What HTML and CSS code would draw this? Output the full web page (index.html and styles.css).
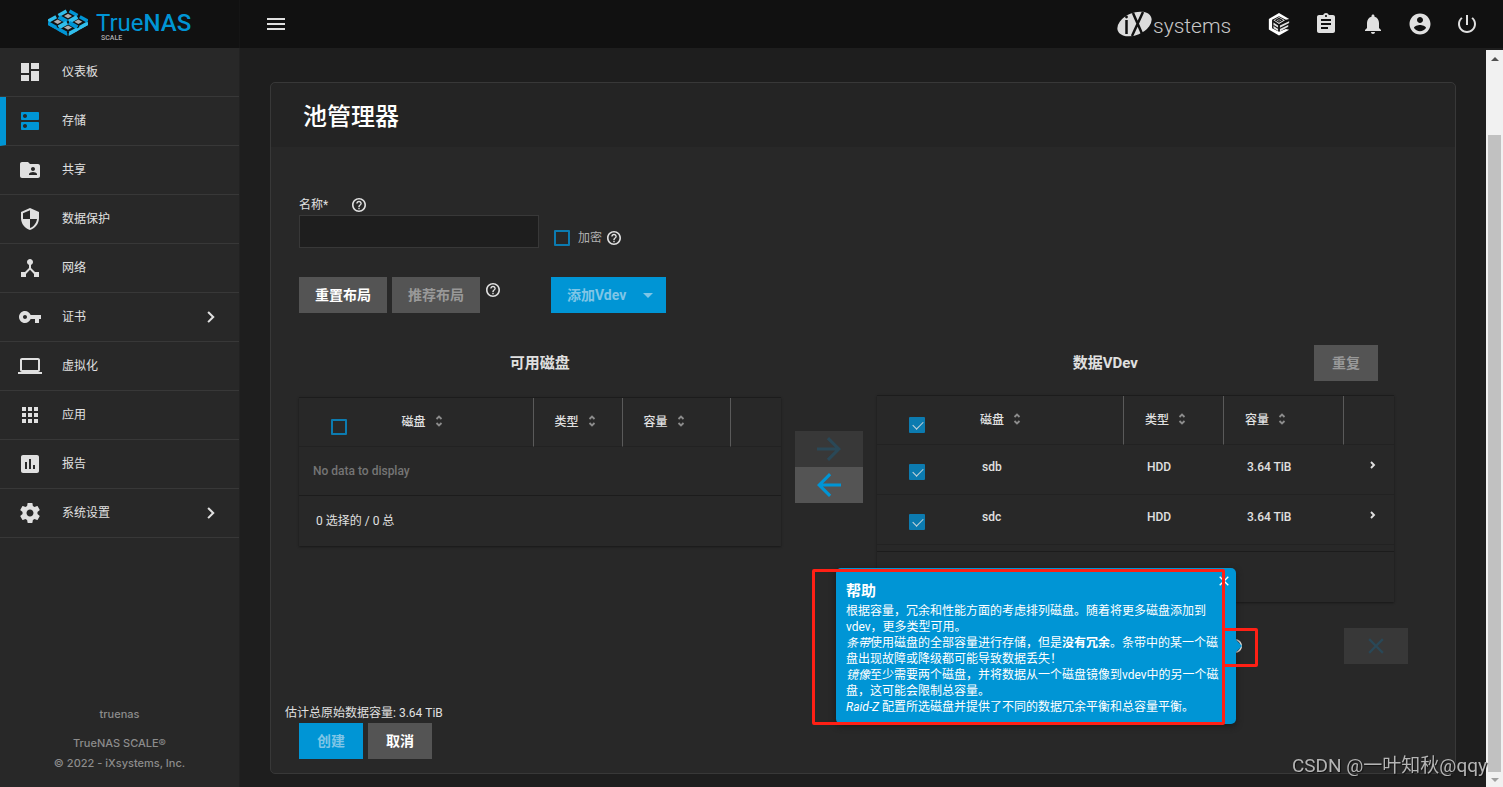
FILE: index.html
```html
<!DOCTYPE html>
<html lang="zh-CN">
<head>
<meta charset="utf-8">
<title>TrueNAS - 池管理器</title>
<link rel="stylesheet" href="styles.css">
</head>
<body>
<svg class="sprite" aria-hidden="true">
  <symbol id="dashboard" viewBox="0 0 24 24"><path d="M3 13h8V3H3v10zm0 8h8v-6H3v6zm10 0h8V11h-8v10zm0-18v6h8V3h-8z"/></symbol>
  <symbol id="storage" viewBox="0 0 24 24"><path d="M20 13H4c-.55 0-1 .45-1 1v6c0 .55.45 1 1 1h16c.55 0 1-.45 1-1v-6c0-.55-.45-1-1-1zM7 19c-1.100 0-2-.9-2-2s.9-2 2-2 2 .9 2 2-.9 2-2 2zM20 3H4c-.55 0-1 .45-1 1v6c0 .55.45 1 1 1h16c.55 0 1-.45 1-1V4c0-.55-.45-1-1-1zM7 9c-1.100 0-2-.9-2-2s.9-2 2-2 2 .9 2 2-.9 2-2 2z"/></symbol>
  <symbol id="share" viewBox="0 0 24 24"><path d="M20 6h-8l-2-2H4c-1.100 0-1.990.9-1.990 2L2 18c0 1.100.9 2 2 2h16c1.100 0 2-.9 2-2V8c0-1.100-.9-2-2-2zm-5 3c1.100 0 2 .9 2 2s-.9 2-2 2-2-.9-2-2 .9-2 2-2zm4 8h-8v-1c0-1.330 2.670-2 4-2s4 .67 4 2v1z"/></symbol>
  <symbol id="shield" viewBox="0 0 24 24"><path d="M12 1L3 5v6c0 5.550 3.840 10.740 9 12 5.160-1.260 9-6.450 9-12V5l-9-4zm0 10.990h7c-.53 4.120-3.280 7.790-7 8.940V12H5V6.300l7-3.110v8.800z"/></symbol>
  <symbol id="hub" viewBox="0 0 24 24"><path d="M17 16l-4-4V8.820C14.160 8.400 15 7.300 15 6c0-1.660-1.340-3-3-3S9 4.340 9 6c0 1.300.84 2.400 2 2.820V12l-4 4H3v5h5v-3.050l4-4.200 4 4.200V21h5v-5h-4z"/></symbol>
  <symbol id="key" viewBox="0 0 24 24"><path d="M12.650 10C11.830 7.670 9.610 6 7 6c-3.310 0-6 2.690-6 6s2.690 6 6 6c2.610 0 4.830-1.670 5.650-4H17v4h4v-4h2v-4H12.650zM7 14c-1.100 0-2-.9-2-2s.9-2 2-2 2 .9 2 2-.9 2-2 2z"/></symbol>
  <symbol id="laptop" viewBox="0 0 24 24"><path d="M20 18c1.100 0 1.990-.9 1.990-2L22 6c0-1.100-.9-2-2-2H4c-1.100 0-2 .9-2 2v10c0 1.100.9 2 2 2H0v2h24v-2h-4zM4 6h16v10H4V6z"/></symbol>
  <symbol id="apps" viewBox="0 0 24 24"><path d="M4 8h4V4H4v4zm6 12h4v-4h-4v4zm-6 0h4v-4H4v4zm0-6h4v-4H4v4zm6 0h4v-4h-4v4zm6-10v4h4V4h-4zm-6 4h4V4h-4v4zm6 6h4v-4h-4v4zm0 6h4v-4h-4v4z"/></symbol>
  <symbol id="report" viewBox="0 0 24 24"><path d="M19 3H5c-1.100 0-2 .9-2 2v14c0 1.100.9 2 2 2h14c1.100 0 2-.9 2-2V5c0-1.100-.9-2-2-2zM9 17H7v-7h2v7zm4 0h-2V7h2v10zm4 0h-2v-4h2v4z"/></symbol>
  <symbol id="gear" viewBox="0 0 24 24"><path d="M19.430 12.980c.04-.32.07-.64.07-.98s-.03-.66-.07-.98l2.110-1.650c.19-.15.24-.42.12-.64l-2-3.460c-.12-.22-.39-.3-.61-.22l-2.490 1c-.52-.4-1.080-.73-1.690-.98l-.38-2.650C14.460 2.180 14.250 2 14 2h-4c-.25 0-.46.18-.49.42l-.38 2.650c-.61.25-1.170.59-1.690.98l-2.490-1c-.23-.09-.49 0-.61.22l-2 3.460c-.13.22-.07.49.12.64l2.110 1.650c-.04.32-.07.65-.07.98s.03.66.07.98l-2.110 1.650c-.19.15-.24.42-.12.64l2 3.460c.12.22.39.3.61.22l2.490-1c.52.4 1.080.73 1.690.98l.38 2.650c.03.24.24.42.49.42h4c.25 0 .46-.18.49-.42l.38-2.650c.61-.25 1.170-.59 1.690-.98l2.490 1c.23.09.49 0 .61-.22l2-3.460c.12-.22.07-.49-.12-.64l-2.110-1.650zM12 15.500c-1.930 0-3.500-1.570-3.500-3.500s1.570-3.500 3.500-3.500 3.500 1.570 3.500 3.500-1.570 3.500-3.500 3.500z"/></symbol>
  <symbol id="chevron" viewBox="0 0 24 24"><path d="M7.500 4.500L10 2l10 10-10 10-2.500-2.500 7.500-7.500z"/></symbol>
  <symbol id="chevron-bold" viewBox="0 0 8 8"><path d="M2 1l3 3-3 3" fill="none" stroke="currentColor" stroke-width="1.900"/></symbol>
  <symbol id="help" viewBox="2 2 20 20"><path d="M11 18h2v-2h-2v2zm1-16C6.480 2 2 6.480 2 12s4.480 10 10 10 10-4.480 10-10S17.520 2 12 2zm0 17.700c-4.300 0-7.700-3.400-7.700-7.700S7.700 4.300 12 4.300s7.700 3.400 7.700 7.700-3.400 7.700-7.700 7.700zM12 6c-2.210 0-4 1.790-4 4h2c0-1.100.9-2 2-2s2 .9 2 2c0 2-3 1.750-3 5h2c0-2.250 3-2.500 3-5 0-2.210-1.790-4-4-4z"/></symbol>
  <symbol id="menu" viewBox="0 0 24 24"><path d="M3 18h18v-2H3v2zm0-5h18v-2H3v2zm0-7v2h18V6H3z"/></symbol>
  <symbol id="truecommand" viewBox="0 0 24 26"><path fill="#fff" d="M12 1l11 6.500-3.500 1L12 4.500 4.500 8.500v9L12 21.500l7.500-3 3.500.7L12 25.500 1 19V7.500z"/><path d="M6 9l6-3.500L18.500 9 12 13zM6 11.500l5 3v6l-5-3zM13 14.500l10-4.500v2l-10 5zM13 18.500l9-4.500v2l-9 5z"/><path d="M8.500 9L12 7l3.500 2L12 11zM6 14.500l5 3M11 9h2" fill="none" stroke="#111" stroke-width="1.200"/></symbol>
  <symbol id="clipboard" viewBox="0 0 24 24"><path d="M19 3h-4.180C14.400 1.840 13.300 1 12 1c-1.300 0-2.400.84-2.820 2H5c-1.100 0-2 .9-2 2v14c0 1.100.9 2 2 2h14c1.100 0 2-.9 2-2V5c0-1.100-.9-2-2-2zm-7 0c.55 0 1 .45 1 1s-.45 1-1 1-1-.45-1-1 .45-1 1-1zm2 14H7v-2h7v2zm3-4H7v-2h10v2zm0-4H7V7h10v2z"/></symbol>
  <symbol id="bell" viewBox="0 0 24 24"><path d="M12 22c1.100 0 2-.9 2-2h-4c0 1.100.89 2 2 2zm6-6v-5c0-3.070-1.640-5.640-4.500-6.320V4c0-.83-.67-1.500-1.500-1.500s-1.500.67-1.500 1.500v.68C7.630 5.360 6 7.920 6 11v5l-2 2v1h16v-1l-2-2z"/></symbol>
  <symbol id="account" viewBox="0 0 24 24"><path d="M12 1.500C6.200 1.500 1.500 6.200 1.500 12S6.200 22.500 12 22.500 22.500 17.800 22.500 12 17.800 1.500 12 1.500zM12 5c1.660 0 3 1.340 3 3s-1.340 3-3 3-3-1.340-3-3 1.340-3 3-3zm0 14.200c-2.500 0-4.710-1.280-6-3.220.03-1.990 4-3.080 6-3.080 1.990 0 5.970 1.090 6 3.080-1.290 1.940-3.500 3.220-6 3.220z"/></symbol>
  <symbol id="power" viewBox="0 0 24 24"><path d="M13 3h-2v10h2V3zm4.830 2.170l-1.420 1.420C17.990 7.860 19 9.810 19 12c0 3.870-3.130 7-7 7s-7-3.130-7-7c0-2.190 1.010-4.140 2.580-5.420L6.170 5.170C4.230 6.820 3 9.260 3 12c0 4.970 4.030 9 9 9s9-4.030 9-9c0-2.740-1.230-5.180-3.170-6.830z"/></symbol>
  <symbol id="sort" viewBox="0 0 8 12"><path d="M1.500 4L4 1.500 6.500 4M1.500 8L4 10.500 6.500 8" fill="none" stroke="currentColor" stroke-width="1.800"/></symbol>
  <symbol id="arrow" viewBox="0 0 24 24"><path d="M12 0l-2.200 2.200 8.300 8.300H0v3h18.100l-8.300 8.300L12 24l12-12z"/></symbol>
  <symbol id="close" viewBox="0 0 14 14"><path d="M1 1l12 12M13 1L1 13" fill="none" stroke="currentColor" stroke-width="2"/></symbol>
</svg>

<div class="app">
  <header class="topbar">
    <a class="brand" href="#" aria-label="TrueNAS SCALE">
      <svg class="brand-mark" viewBox="0 0 40 27">
        <defs>
          <g id="tile">
            <path fill="none" stroke="#31beec" stroke-width="3.400" d="M-9.500-.6l8-4.400M9.500 1.300l-8 4.400"/>
            <path fill="none" stroke="#0095d5" stroke-width="3.400" d="M9.500-.6l-8-4.400M-9.500 1.300l8 4.400"/>
            <path fill="#aeadae" d="M0-2.200L4 0 0 2.200-4 0z"/>
          </g>
        </defs>
        <use href="#tile" x="20" y="7"/>
        <use href="#tile" x="9.700" y="12.800"/>
        <use href="#tile" x="30.300" y="12.800"/>
        <use href="#tile" x="20" y="18.600"/>
        <path fill="#0095d5" d="M0 13l19.300 11.300V27L0 16z"/>
        <path fill="#31beec" d="M40 13L20.700 24.300V27L40 16z"/>
      </svg>
      <span class="brand-text"><span class="brand-name">True<b>NAS</b></span><small>SCALE</small></span>
    </a>
    <button class="icon-btn menu-btn" aria-label="菜单"><svg class="icon"><use href="#menu"/></svg></button>
    <div class="topbar-actions">
      <a class="ix" href="#" aria-label="iXsystems">
        <svg class="ix-mark" viewBox="0 0 35 26"><ellipse cx="17.500" cy="13" rx="18" ry="11" transform="rotate(-23 17.500 13)" fill="#dcdcdc"/><path d="M9.500 9v14M16 2l10 23M26 1L15 25" stroke="#111" stroke-width="2.500" fill="none"/><circle cx="9.500" cy="6" r="1.400" fill="#111"/></svg>
        <span class="ix-text">systems</span>
      </a>
      <button class="icon-btn" aria-label="TrueCommand"><svg class="icon"><use href="#truecommand"/></svg></button>
      <button class="icon-btn" aria-label="任务"><svg class="icon"><use href="#clipboard"/></svg></button>
      <button class="icon-btn" aria-label="通知"><svg class="icon"><use href="#bell"/></svg></button>
      <button class="icon-btn" aria-label="账户"><svg class="icon"><use href="#account"/></svg></button>
      <button class="icon-btn" aria-label="电源"><svg class="icon"><use href="#power"/></svg></button>
    </div>
  </header>

  <div class="body">
    <aside class="sidebar">
      <nav class="nav">
        <a href="#"><svg class="icon"><use href="#dashboard"/></svg><span>仪表板</span></a>
        <a href="#" class="active"><svg class="icon"><use href="#storage"/></svg><span>存储</span></a>
        <a href="#"><svg class="icon"><use href="#share"/></svg><span>共享</span></a>
        <a href="#"><svg class="icon"><use href="#shield"/></svg><span>数据保护</span></a>
        <a href="#"><svg class="icon"><use href="#hub"/></svg><span>网络</span></a>
        <a href="#"><svg class="icon"><use href="#key"/></svg><span>证书</span><svg class="nav-more"><use href="#chevron"/></svg></a>
        <a href="#"><svg class="icon"><use href="#laptop"/></svg><span>虚拟化</span></a>
        <a href="#"><svg class="icon"><use href="#apps"/></svg><span>应用</span></a>
        <a href="#"><svg class="icon"><use href="#report"/></svg><span>报告</span></a>
        <a href="#"><svg class="icon"><use href="#gear"/></svg><span>系统设置</span><svg class="nav-more"><use href="#chevron"/></svg></a>
      </nav>
      <footer class="about">
        <p class="host">truenas</p>
        <p>TrueNAS SCALE®</p>
        <p>© 2022 - iXsystems, Inc.</p>
      </footer>
    </aside>

    <main class="main">
      <section class="card">
        <h1 class="card-title">池管理器</h1>
        <div class="card-body">
          <div class="name-row">
            <div class="field">
              <div class="field-label"><label for="name">名称*</label><svg class="help"><use href="#help"/></svg></div>
              <input class="text-input" id="name" type="text">
            </div>
            <div class="encrypt">
              <input class="check" id="encrypt" type="checkbox"><label for="encrypt">加密</label><svg class="help"><use href="#help"/></svg>
            </div>
          </div>

          <div class="layout-row">
            <button class="btn">重置布局</button>
            <button class="btn" disabled>推荐布局</button>
            <svg class="help layout-help"><use href="#help"/></svg>
            <button class="btn primary add-btn" disabled>添加Vdev <span class="caret"></span></button>
          </div>

          <div class="disks">
            <section class="available">
              <div class="disks-head"><h2>可用磁盘</h2></div>
              <div class="table-box">
                <table class="table">
                  <colgroup><col class="a-check"><col class="a-disk"><col class="a-type"><col class="a-size"><col class="a-more"></colgroup>
                  <thead><tr>
                    <th><input class="check" type="checkbox" aria-label="全选可用磁盘"></th>
                    <th>磁盘<svg class="sort"><use href="#sort"/></svg></th>
                    <th>类型<svg class="sort"><use href="#sort"/></svg></th>
                    <th>容量<svg class="sort"><use href="#sort"/></svg></th>
                    <th></th>
                  </tr></thead>
                  <tbody><tr><td class="empty" colspan="5">No data to display</td></tr></tbody>
                </table>
                <div class="table-foot">0 选择的 / 0 总</div>
              </div>
            </section>

            <div class="movers">
              <button class="mover" disabled aria-label="添加到 VDev"><svg class="arrow"><use href="#arrow"/></svg></button>
              <button class="mover" aria-label="从 VDev 移除"><svg class="arrow left"><use href="#arrow"/></svg></button>
            </div>

            <section class="vdev">
              <div class="disks-head"><h2>数据VDev</h2><button class="btn repeat" disabled>重复</button></div>
              <div class="table-box">
                <table class="table">
                  <colgroup><col class="v-check"><col class="v-disk"><col class="v-type"><col class="v-size"><col class="v-more"></colgroup>
                  <thead><tr>
                    <th><input class="check" type="checkbox" checked aria-label="全选 VDev 磁盘"></th>
                    <th>磁盘<svg class="sort"><use href="#sort"/></svg></th>
                    <th>类型<svg class="sort"><use href="#sort"/></svg></th>
                    <th>容量<svg class="sort"><use href="#sort"/></svg></th>
                    <th></th>
                  </tr></thead>
                  <tbody>
                    <tr><td><input class="check" type="checkbox" checked aria-label="sdb"></td><td>sdb</td><td>HDD</td><td>3.64 TiB</td><td class="expand"><svg class="row-more"><use href="#chevron-bold"/></svg></td></tr>
                    <tr><td><input class="check" type="checkbox" checked aria-label="sdc"></td><td>sdc</td><td>HDD</td><td>3.64 TiB</td><td class="expand"><svg class="row-more"><use href="#chevron-bold"/></svg></td></tr>
                  </tbody>
                </table>
                <div class="table-foot spaced"></div>
              </div>
              <div class="vdev-actions">
                <svg class="help vdev-help"><use href="#help"/></svg>
                <button class="mover remove" disabled aria-label="删除"><svg class="x"><use href="#close"/></svg></button>
                <div class="tooltip" role="tooltip">
                  <button class="tooltip-close" aria-label="关闭"><svg><use href="#close"/></svg></button>
                  <h3>帮助</h3>
                  <p>根据容量，冗余和性能方面的考虑排列磁盘。随着将更多磁盘添加到vdev，更多类型可用。</p>
                  <p><em>条带</em>使用磁盘的全部容量进行存储，但是<strong>没有冗余</strong>。条带中的某一个磁盘出现故障或降级都可能导致数据丢失！</p>
                  <p><em>镜像</em>至少需要两个磁盘，并将数据从一个磁盘镜像到vdev中的另一个磁盘，这可能会限制总容量。</p>
                  <p><em>Raid-Z</em> 配置所选磁盘并提供了不同的数据冗余平衡和总容量平衡。</p>
                </div>
                <span class="mark mark-tip"></span>
                <span class="mark mark-icon"></span>
              </div>
            </section>
          </div>

          <p class="estimate">估计总原始数据容量: 3.64 TiB</p>
          <div class="form-actions">
            <button class="btn primary" disabled>创建</button>
            <button class="btn">取消</button>
          </div>
        </div>
      </section>
    </main>

    <div class="scrollbar" aria-hidden="true"><span class="sb-up"></span><span class="sb-thumb"></span><span class="sb-down"></span></div>
  </div>
</div>
<div class="watermark">CSDN @一叶知秋@qqy</div>
</body>
</html>
```
FILE: styles.css
```css
* { box-sizing: border-box; }
body {
  margin: 0;
  background: #1e1e1e;
  color: #e0e0e0;
  font: 12px/16px Roboto, "Noto Sans CJK SC", sans-serif;
  overflow: hidden;
}
h1, h2, h3, p { margin: 0; }
a { color: inherit; text-decoration: none; }
button, input { font: inherit; color: inherit; }
button { border: 0; padding: 0; background: none; }
svg { fill: currentColor; flex: none; }
.sprite { display: none; }
.app { height: 100vh; display: flex; flex-direction: column; }

/* Top bar */
.topbar { height: 48px; flex: none; display: flex; align-items: center; background: #111; }
.brand { width: 240px; padding-left: 48px; display: flex; gap: 8px; height: 48px; border-right: 1px solid #151515; }
.brand-mark { width: 40px; height: 27px; margin-top: 9px; }
.brand-text { display: flex; flex-direction: column; padding-top: 11px; color: #0095d5; }
.brand-name { font-size: 24px; line-height: 25px; font-weight: 400; }
.brand-name b { font-weight: 500; }
.brand small { font-size: 7px; line-height: 4px; padding-left: 5px; color: #aeadae; font-weight: 500; }
.icon { width: 24px; height: 24px; }
.icon-btn { display: flex; width: 24px; height: 24px; color: #e0e0e0; }
.menu-btn { margin-left: 24px; }
.topbar-actions { margin-left: auto; display: flex; align-items: center; gap: 23px; padding-right: 24px; }
.ix { display: flex; align-items: center; gap: 1px; width: 127px; color: #c8c8c8; }
.ix-mark { width: 35px; height: 26px; }
.ix-text { padding-top: 3px; font-size: 21px; line-height: 26px; font-weight: 300; }

/* Side navigation */
.body { flex: 1; min-height: 0; display: flex; }
.sidebar { width: 240px; flex: none; display: flex; flex-direction: column; justify-content: space-between; background: #282828; border-right: 1px solid #222; }
.nav a { height: 49px; display: flex; align-items: center; gap: 20px; padding: 0 22px 0 18px; border-bottom: 1px solid #383838; }
.nav a.active { border-left: 6px solid #0095d5; padding-left: 12px; }
.nav .active .icon { color: #0095d5; }
.nav-more { width: 14px; height: 14px; margin-left: auto; }
.about { padding-bottom: 14px; text-align: center; color: #8c8c8c; font: 500 11px/20px Inter, sans-serif; }
.host { margin-bottom: 9px; }

/* Page */
.main { flex: 1; min-width: 0; padding: 34px 30px 13px; display: flex; }
.card { flex: 1; min-width: 0; display: flex; flex-direction: column; background: #282828; border: 1px solid #383838; border-radius: 5px; }
.card-title { padding: 18px 32px 14px; background: #242424; border-radius: 5px 5px 0 0; color: #fff; font-size: 24px; line-height: 32px; font-weight: 500; }
.card-body { flex: 1; display: flex; flex-direction: column; padding: 48px 47px 14px 28px; }
.help { width: 14px; height: 14px; }
.name-row { display: flex; align-items: flex-end; gap: 15px; }
.field { width: 240px; }
.field-label { display: flex; align-items: center; gap: 24px; height: 20px; }
.text-input { display: block; width: 100%; height: 33px; border: 1px solid #383838; background: #1e1e1e; padding: 0 8px; }
.encrypt { display: flex; align-items: center; gap: 5px; height: 20px; color: #b0b0b0; }
.encrypt label { padding-left: 3px; }
.encrypt .help { color: #e0e0e0; }
.check { appearance: none; display: block; width: 16px; height: 16px; margin: 0; border: 2px solid #0c7bb0; border-radius: 1px; }
.check:checked { background: #0c7bb0; }
.check:checked::after { content: ""; display: block; width: 9px; height: 5px; margin: 2px; border: solid #c8d4da; border-width: 0 0 1px 1px; rotate: -45deg; }

.btn { height: 36px; min-width: 64px; padding: 0 16px; background: #545454; color: #fff; font-size: 14px; font-weight: 700; }
.btn:disabled { color: #999; }
.btn.primary { background: #0095d5; }
.btn.primary:disabled { color: #7fc5e6; }
.layout-row { display: flex; gap: 5px; margin-top: 29px; }
.layout-help { margin: 6px 0 0 1px; }
.add-btn { display: flex; align-items: center; gap: 17px; margin-left: 46px; padding: 0 13px 0 16px; }
.caret { border: 5px solid transparent; border-top-color: currentColor; border-bottom: 0; }

/* Disk tables */
.disks { display: grid; grid-template-columns: minmax(0, 482fr) 68px minmax(0, 532fr); gap: 14px; margin-top: 32px; }
.disks-head { display: flex; justify-content: center; align-items: center; height: 36px; }
.disks-head h2 { font-size: 15px; line-height: 20px; font-weight: 700; }
.available .table-box { margin-top: 16px; }
.vdev { padding-right: 14px; }
.vdev .disks-head { padding-right: 16px; }
.vdev h2 { flex: 1; padding-left: 20px; text-align: center; }
.vdev .table-box { margin-top: 14px; }
.table-box { border-top: 1px solid #1c1c1c; box-shadow: 0 1px 2px #181818; }
.table { width: 100%; table-layout: fixed; border-collapse: separate; border-spacing: 0; }
.a-disk { width: 153px; } .a-type { width: 89px; } .a-size { width: 108px; } .a-more { width: 51px; }
.v-disk { width: 165px; } .v-type { width: 100px; } .v-size { width: 120px; } .v-more { width: 51px; }
th, td { height: 50px; padding: 0 0 6px 24px; text-align: left; font-weight: 500; border-bottom: 1px solid #222; }
th { height: 49px; padding: 0 0 0 22px; }
th + th + th { padding-left: 21px; border-left: 1px solid #5a5a5a; }
th .check { margin: 10px 0 0 10px; }
td .check { margin: 10px 0 0 8px; }
.sort { width: 8px; height: 12px; margin-left: 9px; vertical-align: -1px; color: #8c8c8c; }
.empty { padding: 0 14px; height: 48px; color: #757575; border-bottom: 0; }
.table-foot { height: 51px; padding: 17px; border-top: 1px solid #1c1c1c; }
.spaced { margin-top: 6px; }
td.expand { padding: 0 0 10px 26px; }
.row-more { display: block; width: 8px; height: 8px; }
.movers { padding-top: 86px; }
.mover { display: flex; align-items: center; justify-content: center; width: 68px; height: 36px; background: #545454; color: #0095d5; }
.mover:disabled { background: #383838; color: #2a4857; }
.arrow { width: 24px; height: 24px; }
.left { rotate: 180deg; }

/* Vdev tools with the open help bubble */
.vdev-actions { position: relative; display: flex; justify-content: flex-end; align-items: center; margin: 26px -14px 0 0; }
.vdev-help { margin-right: 102px; }
.remove { width: 64px; }
.x { width: 16px; height: 16px; }
.tooltip { position: absolute; top: -60px; right: 172px; width: 400px; padding: 13px 16px 9px 10px; background: #0095d5; color: #fff; border-radius: 5px; box-shadow: 0 2px 6px #1a1a1a; }
.tooltip::after { content: ""; position: absolute; left: 100%; top: 72px; border: 6px solid transparent; border-left-color: #0095d5; border-right: 0; }
.tooltip h3 { font-size: 15px; line-height: 20px; padding-bottom: 2px; font-weight: 700; }
.tooltip-close { position: absolute; top: 8px; right: 7px; width: 10px; height: 10px; }
.tooltip-close svg { display: block; width: 10px; height: 10px; }
.mark { position: absolute; border: 3px solid #ff2015; border-radius: 2px; }
.mark-tip { top: -59px; right: 183px; width: 413px; height: 156px; }
.mark-icon { top: 0; right: 150px; width: 36px; height: 39px; }

.estimate { margin: auto 0 2px -14px; }
.form-actions { display: flex; gap: 5px; }

/* Scroll track */
.scrollbar { width: 17px; flex: none; margin-top: 2px; padding: 7px 2px 5px; background: #f1f1f1; display: flex; flex-direction: column; align-items: center; }
.sb-up, .sb-down { border: 4px solid transparent; flex: none; }
.sb-up { border-bottom-color: #505050; border-top: 0; margin-bottom: 74px; }
.sb-thumb { flex: 1; width: 13px; background: #c1c1c1; margin-bottom: 6px; }
.sb-down { border-top-color: #a0a0a0; border-bottom: 0; }
.watermark { position: fixed; right: 16px; bottom: 8px; color: #b4b4b4; font: 19px/26px Roboto, "Noto Sans CJK SC", sans-serif; text-shadow: 1px 1px 1px #111; }
```
